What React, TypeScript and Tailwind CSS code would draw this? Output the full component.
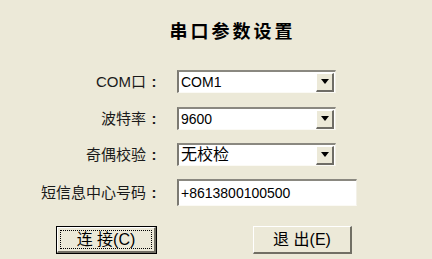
import React from 'react';

const font = { fontFamily: '"Liberation Sans", "Noto Sans CJK SC", sans-serif' };

function Combo({ value, big }: { value: string; big?: boolean }) {
  return (
    <div className="flex h-[23px] w-[159px] items-center border-t-2 border-l-2 border-t-[#8a8880] border-l-[#7c7a72] border-b border-r border-b-[#fbfaf5] border-r-[#f3f1e8] bg-white">
      <span className={big ? 'flex-1 pl-[2px] text-[16px] leading-none text-black' : 'flex-1 pl-[2px] text-[14px] leading-none text-black'}>
        {value}
      </span>
      <div className="mr-[1px] flex h-[19px] w-[18px] items-center justify-center border-t border-l border-white border-b-2 border-r-2 border-b-[#6f6d66] border-r-[#6f6d66] bg-[#ece9d8]">
        <svg width="8" height="5" viewBox="0 0 8 5">
          <path d="M0 0h8L4 5z" fill="#000" />
        </svg>
      </div>
    </div>
  );
}

function Row({ label, children }: { label: string; children: React.ReactNode }) {
  return (
    <div className="flex items-center">
      <div className="flex w-[162px] items-center justify-end text-[15px] leading-none text-[#1a1a1a]">
        <span>{label}</span>
        <span className="w-[16px] text-center font-bold">:</span>
      </div>
      <div className="ml-[15px]">{children}</div>
    </div>
  );
}

export default function App() {
  return (
    <div style={font} className="flex h-[259px] w-[432px] flex-col bg-[#ece9d8]">
      <h1 className="mt-[22px] pl-[33px] text-center text-[18px] font-bold leading-[20px] tracking-[3px] text-black">
        串口参数设置
      </h1>

      <div className="mt-[28px] flex flex-col">
        <Row label="COM口">
          <Combo value="COM1" />
        </Row>
        <div className="mt-[14px]">
          <Row label="波特率">
            <Combo value="9600" />
          </Row>
        </div>
        <div className="mt-[13px]">
          <Row label="奇偶校验">
            <Combo value="无校检" big />
          </Row>
        </div>
        <div className="mt-[13px]">
          <Row label="短信息中心号码">
            <div className="flex h-[27px] w-[180px] items-center border-t-2 border-l-2 border-t-[#8a8880] border-l-[#7c7a72] border-b border-r border-b-[#fbfaf5] border-r-[#f3f1e8] bg-white pl-[2px] text-[14px] leading-none text-black">
              +8613800100500
            </div>
          </Row>
        </div>
      </div>

      <div className="mt-[20px] ml-[56px] flex gap-[96px]">
        <button className="h-[28px] w-[101px] border border-black bg-[#ece9d8] p-0">
          <div className="flex h-full w-full items-center justify-center border-t border-l border-white border-b-2 border-r-2 border-b-[#716f64] border-r-[#716f64] p-[2px]">
            <div className="flex h-full w-full items-center justify-center border border-dotted border-black text-[16px] leading-none text-black">
              连 接(C)
            </div>
          </div>
        </button>
        <button className="h-[28px] w-[99px] border-t border-l border-white border-b-2 border-r-2 border-b-[#716f64] border-r-[#716f64] bg-[#ece9d8] p-0">
          <div className="flex h-full w-full items-center justify-center text-[16px] leading-none text-black">
            退 出(E)
          </div>
        </button>
      </div>
    </div>
  );
}
